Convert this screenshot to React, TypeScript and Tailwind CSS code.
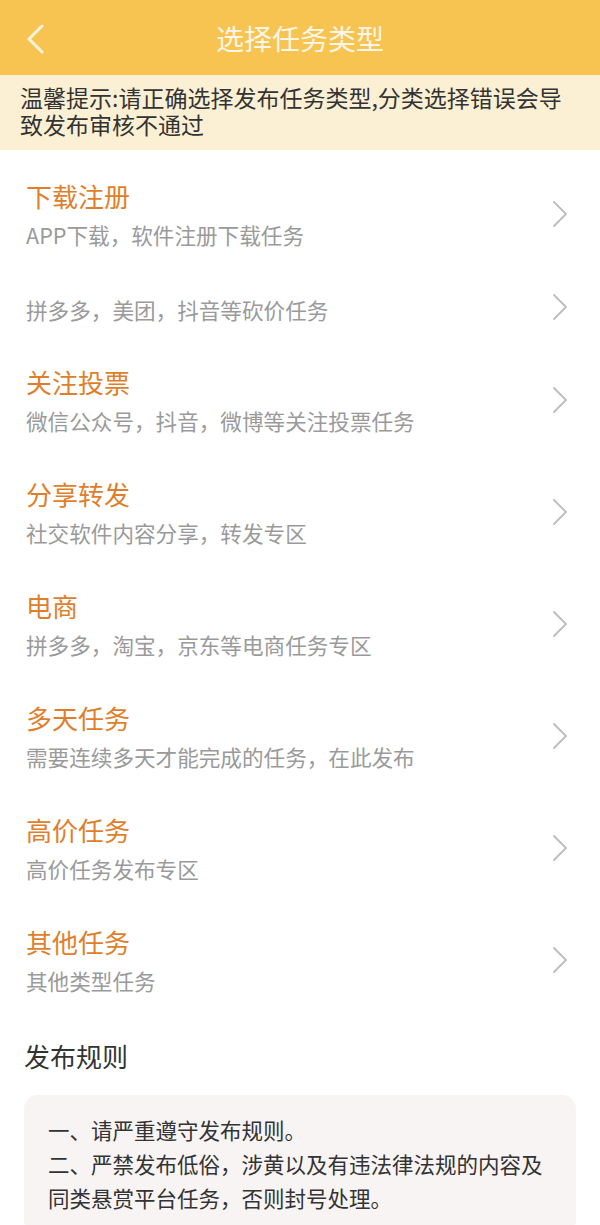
import { ChevronRight } from "lucide-react"

const types = [
  { title: "下载注册", desc: "APP下载，软件注册下载任务" },
  { title: "", desc: "拼多多，美团，抖音等砍价任务" },
  { title: "关注投票", desc: "微信公众号，抖音，微博等关注投票任务" },
  { title: "分享转发", desc: "社交软件内容分享，转发专区" },
  { title: "电商", desc: "拼多多，淘宝，京东等电商任务专区" },
  { title: "多天任务", desc: "需要连续多天才能完成的任务，在此发布" },
  { title: "高价任务", desc: "高价任务发布专区" },
  { title: "其他任务", desc: "其他类型任务" },
]

function TypeRow({ title, desc }: { title: string; desc: string }) {
  return (
    <div className={`flex items-center pl-[26px] pr-[32px] ${title ? "h-[112px]" : "h-[74px]"}`}>
      <div className="flex flex-1 flex-col">
        {title && <div className="text-[26px] leading-[32px] text-[#e07f2b]">{title}</div>}
        <div className={`text-[21.6px] leading-[26px] text-[#9a9a9a] ${title ? "mt-[10px]" : "mt-[6px]"}`}>{desc}</div>
      </div>
      <svg width="16" height="28" viewBox="0 0 16 28" fill="none" className="text-[#bdbdbd]">
        <path d="M2 2 L14 14 L2 26" stroke="currentColor" strokeWidth="1.8" strokeLinecap="round" strokeLinejoin="round" />
      </svg>
    </div>
  )
}

export default function App() {
  return (
    <div className="h-[1225px] w-[600px] overflow-hidden bg-white font-['Noto_Sans_CJK_SC',sans-serif]">
      <header className="relative flex h-[75px] items-center justify-center bg-[#f7c452]">
        <svg width="20" height="30" viewBox="0 0 20 30" fill="none" className="absolute left-[25px] top-[24px] text-[#fdf3dc]">
          <path d="M17 2 L4 15 L17 28" stroke="currentColor" strokeWidth="3" strokeLinecap="round" strokeLinejoin="round" />
        </svg>
        <h1 className="text-[28px] leading-none text-[#fdf6e6]">选择任务类型</h1>
      </header>

      <div className="h-[75px] bg-[#fbf0d4] pl-[20px] pr-[20px] pt-[9px] text-[23px] leading-[27px] text-[#333333]">
        温馨提示:请正确选择发布任务类型,分类选择错误会导致发布审核不通过
      </div>

      <div className="pt-[8px]">
        {types.map((t, i) => (
          <TypeRow key={i} title={t.title} desc={t.desc} />
        ))}
      </div>

      <div className="px-[24px]">
        <h2 className="mt-[24px] text-[26px] leading-[32px] text-[#333333]">发布规则</h2>
        <div className="mt-[23px] rounded-[14px] bg-[#f8f4f4] px-[24px] pt-[18px] pb-[20px] text-[21.5px] leading-[34px] text-[#333333]">
          <p>一、请严重遵守发布规则。</p>
          <p>二、严禁发布低俗，涉黄以及有违法律法规的内容及同类悬赏平台任务，否则封号处理。</p>
        </div>
      </div>
    </div>
  )
}
